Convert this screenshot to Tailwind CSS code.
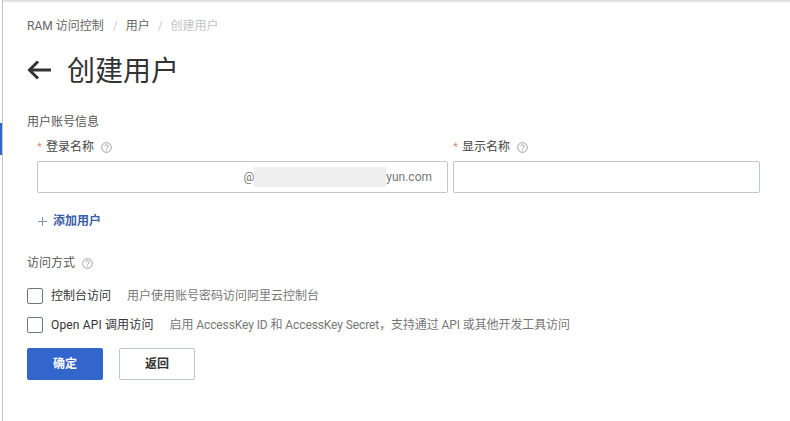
<!DOCTYPE html>
<html lang="zh-CN">
<head>
    <meta charset="UTF-8">
    <title>创建用户</title>
    <script src="https://cdn.jsdelivr.net/npm/@tailwindcss/browser@4"></script>
</head>
<body class="bg-white w-[790px] h-[421px] overflow-hidden font-['Roboto','Noto_Sans_CJK_SC',sans-serif] text-[#333]">
    <div class="flex h-[421px]">
        <!-- Sidebar edge -->
        <div class="w-[3px] shrink-0 border-r border-[#c0c6cc] pt-[123px]">
            <div class="w-[2px] h-[32px] bg-[#3366cc]"></div>
        </div>

        <div class="relative flex-1 pl-[24px]">
            <div class="absolute left-0 right-0 top-0 h-[3px] bg-gradient-to-b from-[#d8d8d8] to-white"></div>

            <!-- Breadcrumb -->
            <div class="flex items-center h-[18px] mt-[17px] text-[12px] text-[#666]">
                <span>RAM 访问控制</span>
                <span class="mx-[9px] text-[#ccc]">/</span>
                <span class="-ml-[1px]">用户</span>
                <span class="mx-[8px] text-[#ccc]">/</span>
                <span class="text-[#c4c4c4]">创建用户</span>
            </div>

            <!-- Title -->
            <div class="flex items-center h-[40px] mt-[15px]">
                <svg class="w-[25px] h-[20px] text-[#333]" viewBox="0 0 25 20" fill="none" stroke="currentColor" stroke-width="3">
                    <path d="M24 10H2"/>
                    <path d="M11 1.500L2.500 10l8.500 8.500"/>
                </svg>
                <h1 class="ml-[15px] pt-[4px] text-[28px] leading-[40px] font-normal text-[#333]">创建用户</h1>
            </div>

            <div class="mt-[23px] h-[18px] text-[12px] leading-[18px] text-[#555]">用户账号信息</div>

            <!-- Fields -->
            <div class="flex mt-[7px] ml-[10px] gap-[5px]">
                <div class="w-[411px]">
                    <div class="flex items-center h-[18px] text-[12px] text-[#444]">
                        <span class="text-[#c9825f] w-[9px] font-light">*</span>
                        <span>登录名称</span>
                        <svg class="ml-[7px] w-[11px] h-[11px]" viewBox="0 0 12 12" fill="none" stroke="#999">
                            <circle cx="6" cy="6" r="5.300"/>
                            <path d="M4.300 4.800a1.800 1.800 0 1 1 2.700 1.500c-.7.400-1 .7-1 1.300M6 8.400v1.100"/>
                        </svg>
                    </div>
                    <div class="flex items-center justify-end h-[32px] mt-[5px] border border-[#c0c6cc] rounded-[2px] pr-[15px] text-[12px] text-[#777]">
                        <span>@</span>
                        <div class="w-[132px] h-[20px] bg-[#eeeeee] blur-[0.5px]"></div>
                        <span>yun.com</span>
                    </div>
                </div>
                <div class="w-[307px]">
                    <div class="flex items-center h-[18px] text-[12px] text-[#444]">
                        <span class="text-[#c9825f] w-[9px] font-light">*</span>
                        <span>显示名称</span>
                        <svg class="ml-[7px] w-[11px] h-[11px]" viewBox="0 0 12 12" fill="none" stroke="#999">
                            <circle cx="6" cy="6" r="5.300"/>
                            <path d="M4.300 4.800a1.800 1.800 0 1 1 2.700 1.500c-.7.400-1 .7-1 1.300M6 8.400v1.100"/>
                        </svg>
                    </div>
                    <div class="h-[32px] mt-[5px] border border-[#c0c6cc] rounded-[2px]"></div>
                </div>
            </div>

            <!-- Add user -->
            <div class="flex items-center h-[18px] mt-[19px] ml-[11px] text-[12px] font-semibold text-[#3b5ea8]">
                <svg class="w-[9px] h-[9px]" viewBox="0 0 9 9" stroke="#8d8fa8" fill="none">
                    <path d="M4.500 0v9M0 4.500h9"/>
                </svg>
                <span class="ml-[6px]">添加用户</span>
            </div>

            <!-- Access mode -->
            <div class="flex items-center h-[18px] mt-[24px] text-[12px] text-[#555]">
                <span>访问方式</span>
                <svg class="ml-[7px] w-[11px] h-[11px]" viewBox="0 0 12 12" fill="none" stroke="#999">
                    <circle cx="6" cy="6" r="5.300"/>
                    <path d="M4.300 4.800a1.800 1.800 0 1 1 2.700 1.500c-.7.400-1 .7-1 1.300M6 8.400v1.100"/>
                </svg>
            </div>

            <div class="flex items-center h-[16px] mt-[16px] text-[12px]">
                <div class="w-[16px] h-[16px] border border-[#66788a] rounded-[2px]"></div>
                <span class="ml-[8px] text-[#333]">控制台访问</span>
                <span class="ml-[16px] text-[#777]">用户使用账号密码访问阿里云控制台</span>
            </div>
            <div class="flex items-center h-[16px] mt-[13px] text-[12px]">
                <div class="w-[16px] h-[16px] border border-[#66788a] rounded-[2px]"></div>
                <span class="ml-[8px] text-[#333] tracking-[0.15px]">Open API 调用访问</span>
                <span class="ml-[16px] text-[#777] tracking-[-0.1px]">启用 AccessKey ID 和 AccessKey Secret，支持通过 API 或其他开发工具访问</span>
            </div>

            <!-- Actions -->
            <div class="flex mt-[15px] gap-[16px] text-[12px] font-semibold">
                <button class="w-[76px] h-[32px] rounded-[2px] bg-[#3366cc] text-white">确定</button>
                <button class="w-[76px] h-[32px] rounded-[2px] border border-[#c0c6cc] bg-white text-[#333]">返回</button>
            </div>
        </div>
    </div>
</body>
</html>
